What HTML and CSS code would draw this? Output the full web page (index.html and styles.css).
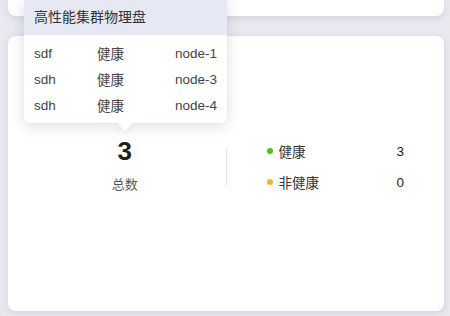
FILE: index.html
```html
<!DOCTYPE html>
<html lang="en">

<head>
    <meta charset="UTF-8">
    <meta name="viewport" content="width=device-width, initial-scale=1.0">
    <title>disk status</title>
    <link rel="stylesheet" href="styles.css">
</head>

<body>
    <div class="page">
        <div class="card card-top"></div>
        <div class="card card-stat">
            <div class="stat-total">
                <div class="total-num">3</div>
                <div class="total-label">总数</div>
            </div>
            <div class="stat-split"></div>
            <div class="stat-list">
                <div class="stat-row">
                    <span class="dot dot-ok"></span>
                    <span class="stat-name">健康</span>
                    <span class="stat-val">3</span>
                </div>
                <div class="stat-row">
                    <span class="dot dot-bad"></span>
                    <span class="stat-name">非健康</span>
                    <span class="stat-val">0</span>
                </div>
            </div>
        </div>

        <div class="tip">
            <div class="tip-head">高性能集群物理盘</div>
            <div class="tip-body">
                <span>sdf</span><span>健康</span><span>node-1</span>
                <span>sdh</span><span>健康</span><span>node-3</span>
                <span>sdh</span><span>健康</span><span>node-4</span>
            </div>
        </div>
    </div>
</body>

</html>
```

FILE: styles.css
```css
html,
body {
    margin: 0;
    padding: 0;
    background: #e8e9ef;
    font-family: "Liberation Sans", "Noto Sans CJK SC", sans-serif;
    color: #333333;
}

.page {
    position: relative;
    padding: 0 6px 0 8px;
    height: 316px;
    box-sizing: border-box;
}

.card {
    background: #ffffff;
    border-radius: 8px;
    box-shadow: 0 2px 6px rgba(60, 64, 90, 0.12);
}

.card-top {
    height: 16px;
    border-radius: 0 0 8px 8px;
    margin-bottom: 20px;
}

.card-stat {
    height: 275px;
    box-sizing: border-box;
    padding: 100px 16px 0 16px;
    display: grid;
    grid-template-columns: 1fr 1px 1fr;
    align-items: start;
}

.stat-total {
    display: flex;
    flex-direction: column;
    align-items: center;
}

.total-num {
    font-size: 26px;
    font-weight: bold;
    line-height: 30px;
    color: #1f1f1f;
}

.total-label {
    margin-top: 10px;
    font-size: 13px;
    line-height: 18px;
    color: #555555;
}

.stat-split {
    height: 38px;
    margin-top: 12px;
    background: #e4e5ea;
}

.stat-list {
    margin-top: 5px;
    padding: 0 24px 0 40px;
    display: flex;
    flex-direction: column;
    gap: 11px;
}

.stat-row {
    display: flex;
    align-items: center;
    height: 20px;
    font-size: 13.5px;
}

.dot {
    width: 6px;
    height: 6px;
    border-radius: 50%;
    margin-right: 6px;
}

.dot-ok {
    background: #4cc21c;
}

.dot-bad {
    background: #ffb03a;
}

.stat-name {
    flex: 1;
    color: #333333;
}

.stat-val {
    color: #222222;
}

.tip {
    position: absolute;
    left: 24px;
    top: 0;
    width: 203px;
    background: #ffffff;
    border-radius: 0 0 6px 6px;
    box-shadow: 0 3px 14px rgba(40, 44, 70, 0.16);
    font-size: 13.5px;
}

.tip::after {
    content: '';
    position: absolute;
    left: 96px;
    bottom: -6px;
    width: 10px;
    height: 10px;
    background: #ffffff;
    transform: rotate(45deg);
    box-shadow: 3px 3px 5px rgba(40, 44, 70, 0.06);
}

.tip-head {
    height: 35px;
    line-height: 35px;
    padding: 0 10px;
    background: #e6e9f3;
    font-size: 14px;
    color: #333333;
}

.tip-body {
    position: relative;
    z-index: 1;
    padding: 5px 10px;
    display: grid;
    grid-template-columns: 63px 1fr auto;
    grid-auto-rows: 26px;
    align-items: center;
    color: #444444;
}
```
